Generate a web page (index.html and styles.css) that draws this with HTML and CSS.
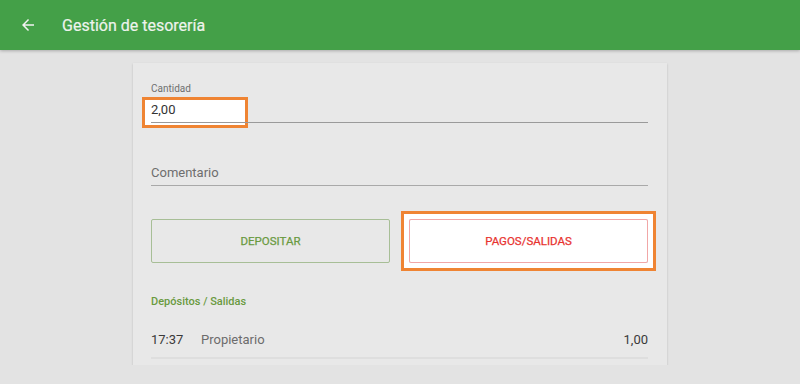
FILE: index.html
```html
<!DOCTYPE html>
<html lang="es">
<head>
<meta charset="utf-8">
<title>Gestión de tesorería</title>
<link rel="stylesheet" href="styles.css">
</head>
<body>
<header class="appbar">
  <svg class="back" viewBox="0 0 24 24" width="18" height="18"><path fill="#f2f2f2" d="M20 11H7.83l5.59-5.59L12 4l-8 8 8 8 1.41-1.41L7.83 13H20v-2z"/></svg>
  <h1 class="title">Gestión de tesorería</h1>
</header>
<main class="main">
  <section class="card">
    <div class="field">
      <label class="label">Cantidad</label>
      <div class="input highlight"><span class="value">2,00</span></div>
    </div>
    <div class="field comment">
      <div class="input"><span class="placeholder">Comentario</span></div>
    </div>
    <div class="buttons">
      <button class="btn deposit">DEPOSITAR</button>
      <button class="btn payout">PAGOS/SALIDAS</button>
    </div>
    <h2 class="subtitle">Depósitos / Salidas</h2>
    <div class="row">
      <span class="time">17:37</span>
      <span class="who">Propietario</span>
      <span class="amount">1,00</span>
    </div>
  </section>
</main>
</body>
</html>
```

FILE: styles.css
```css
html, body {
  margin: 0;
  padding: 0;
  background: #e3e3e3;
  font-family: Roboto, "Noto Sans", sans-serif;
}
.appbar {
  height: 50px;
  background: #44a048;
  display: flex;
  align-items: center;
  box-shadow: 0 1px 3px rgba(0,0,0,0.25);
  position: relative;
  z-index: 2;
}
.back {
  margin-left: 19px;
  display: block;
}
.title {
  margin: 0 0 0 25px;
  font-size: 16px;
  color: #eef3ed;
  letter-spacing: 0;
  -webkit-text-stroke: 0.2px #eef3ed;
  font-weight: 400;
}
.main {
  padding-top: 13px;
  display: flex;
  justify-content: center;
}
.card {
  width: 534px;
  box-sizing: border-box;
  background: #e8e8e8;
  box-shadow: 0 1px 2px rgba(0,0,0,0.18);
  padding: 20px 19px 6px 18px;
}
.field {
  display: flex;
  flex-direction: column;
}
.label {
  font-size: 10px;
  color: #6f6f6f;
  line-height: 12px;
}
.input {
  position: relative;
  height: 25px;
  margin-top: 2px;
  display: flex;
  align-items: center;
}
.input > span { position: relative; z-index: 1; }
.value {
  font-size: 13px;
  color: #333;
}
.highlight::before {
  content: "";
  position: absolute;
  left: -9px;
  top: 0;
  width: 100px;
  height: 25px;
  background: #fff;
  border: 3px solid #ef8433;
  z-index: 0;
}
.highlight::after {
  content: "";
  position: absolute;
  left: 0; right: 0; bottom: -1px;
  height: 1px;
  background: #9a9a9a;
  z-index: 1;
}
.comment { margin-top: 35px; }
.comment .input {
  border-bottom: 1.5px solid #a9a9a9;
  height: 26px;
  box-sizing: content-box;
  align-items: flex-end;
}
.comment .input .placeholder { margin-bottom: 5px; }
.placeholder {
  font-size: 13px;
  color: #6e6e6e;
}
.buttons {
  display: flex;
  gap: 19px;
  margin-top: 33px;
}
.btn {
  flex: 1;
  height: 44px;
  border-radius: 2px;
  font-family: Roboto, sans-serif;
  font-size: 11.5px;
  font-weight: 400;
  background: #e8e8e8;
  -webkit-text-stroke: 0.25px currentColor;
}
.deposit {
  border: 1px solid #a7be96;
  color: #6a9a3f;
}
.payout {
  position: relative;
  border: 1px solid #f1a7a7;
  color: #e8332f;
  background: #fff;
}
.payout::before {
  content: "";
  position: absolute;
  inset: -9px;
  border: 3px solid #ef8433;
}
.payout::after {
  content: "";
  position: absolute;
  inset: -6px;
  border: 5px solid #fff;
}
.subtitle {
  margin: 31px 0 0 0;
  font-size: 11px;
  font-weight: 500;
  color: #6a9a3f;
  line-height: 16px;
}
.row {
  display: flex;
  align-items: center;
  margin-top: 11px;
  height: 36px;
  border-bottom: 2px solid #dedede;
  font-size: 13px;
}
.time { color: #3a3a3a; width: 50px; }
.who { color: #6c6c6c; }
.amount { margin-left: auto; color: #3a3a3a; }
```
